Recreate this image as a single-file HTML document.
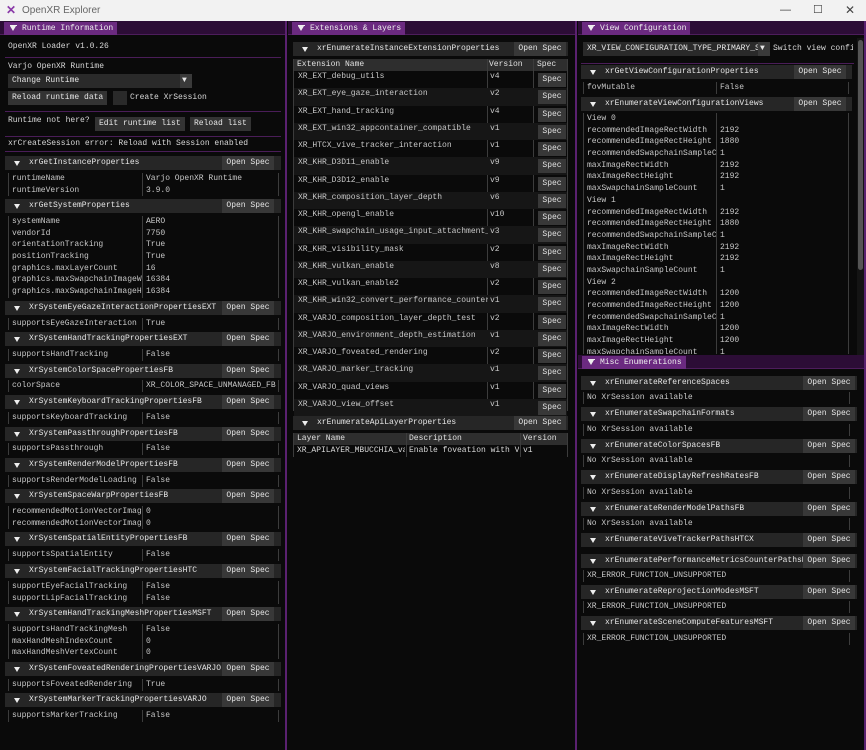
<!DOCTYPE html>
<html><head><meta charset="utf-8"><style>
*{margin:0;padding:0;box-sizing:border-box}
body{width:866px;height:750px;background:#0a0a0a;position:relative;overflow:hidden;font:8px/12px "Liberation Mono",monospace;color:#d8d8d8}
.a{position:absolute;white-space:pre}
.tb{position:absolute;height:21px;background:#f2f2f2;left:0;top:0;width:866px;font:10px/21px "Liberation Sans",sans-serif;color:#666}
.bar{position:absolute;height:14px;background:#2c0d36;border-bottom:1px solid #4d1d5c}
.tab{position:absolute;top:1px;height:13px;background:#6b2a80;color:#eee;padding:0 4px 0 18px;line-height:13px}
.tab:before{content:"";position:absolute;left:6px;top:4px;border:3.5px solid transparent;border-top:5px solid #eee;border-bottom:0}
.tab:after{content:"";position:absolute;left:6px;top:3px;width:7px;height:1px;background:#eee}
.vl{position:absolute;width:2px;background:#5a2170;top:21px}
.sep{position:absolute;height:1px;background:#4a1d58}
.h{position:absolute;height:14px;background:#262626;color:#e6e6e6;line-height:14px;padding-left:24px;white-space:pre;overflow:hidden}
.h:before{content:"";position:absolute;left:9px;top:5px;border:3.5px solid transparent;border-top:5px solid #eee;border-bottom:0}
.h b{position:absolute;right:7px;top:0;width:52px;height:14px;background:#383838;font-weight:normal;text-align:center}
.t{position:absolute;border-left:1px solid #3c3c3c;border-right:1px solid #3c3c3c;color:#c8c8c8}
.r{display:flex;height:11.7px;line-height:11.7px;white-space:pre}
.r i{font-style:normal;overflow:hidden;border-right:1px solid #3c3c3c;padding-left:3px}
.r span{padding-left:3px;overflow:hidden}
.btn{position:absolute;background:#333;height:14px;line-height:14px;padding:0 4px;color:#e6e6e6;white-space:pre}
.er{position:absolute;height:17.26px;line-height:12px;white-space:pre;color:#c8c8c8}
.er i{position:absolute;font-style:normal;left:4px}
.er u{position:absolute;text-decoration:none;left:196px}
.er s{position:absolute;text-decoration:none;left:244px;top:2px;width:28px;height:14px;background:#383838;text-align:center;line-height:14px;color:#e0e0e0}
</style></head><body>
<div class="tb"><span class="a" style="left:6px;top:0;color:#8a3aa8;font-weight:bold;font-size:12px">✕</span><span class="a" style="left:22px;top:0">OpenXR Explorer</span>
<span class="a" style="left:780px;top:0;font-size:11px;color:#444">—</span><span class="a" style="left:813px;top:0;font-size:11px;color:#444">☐</span><span class="a" style="left:845px;top:0;font-size:12px;color:#444">✕</span></div>

<div class="bar" style="left:0;top:21px;width:287px"><div class="tab" style="left:4px">Runtime Information</div></div>
<div class="bar" style="left:288px;top:21px;width:288px"><div class="tab" style="left:4px">Extensions &amp; Layers</div></div>
<div class="bar" style="left:578px;top:21px;width:288px"><div class="tab" style="left:4px">View Configuration</div></div>
<div class="bar" style="left:578px;top:355px;width:288px"><div class="tab" style="left:4px">Misc Enumerations</div></div>
<div class="vl" style="left:285px;height:729px"></div>
<div class="vl" style="left:575px;height:729px"></div>
<div class="vl" style="left:864px;height:729px"></div>

<!-- Panel 1 -->
<div class="a" style="left:8px;top:41px">OpenXR Loader v1.0.26</div>
<div class="sep" style="left:5px;top:57px;width:276px"></div>
<div class="a" style="left:8px;top:61px">Varjo OpenXR Runtime</div>
<div class="btn" style="left:8px;top:74px;width:184px;background:#2a2a2a">Change Runtime</div>
<div class="btn" style="left:180px;top:74px;width:12px;background:#3a3a3a;padding:0 2px">▼</div>
<div class="btn" style="left:8px;top:91px">Reload runtime data</div>
<div class="a" style="left:113px;top:91px;width:14px;height:14px;background:#2a2a2a"></div>
<div class="a" style="left:130px;top:92px">Create XrSession</div>
<div class="sep" style="left:5px;top:111px;width:276px"></div>
<div class="a" style="left:8px;top:115px">Runtime not here?</div>
<div class="btn" style="left:95px;top:117px">Edit runtime list</div>
<div class="btn" style="left:190px;top:117px">Reload list</div>
<div class="sep" style="left:5px;top:136px;width:276px"></div>
<div class="a" style="left:8px;top:138px">xrCreateSession error: Reload with Session enabled</div>
<div class="sep" style="left:5px;top:151px;width:276px"></div>

<div class="h" style="left:5px;top:156px;width:276px">xrGetInstanceProperties<b>Open Spec</b></div>
<div class="t" style="left:8px;top:173px;width:271px"><div class="r"><i style="width:134px">runtimeName</i><span>Varjo OpenXR Runtime</span></div><div class="r"><i style="width:134px">runtimeVersion</i><span>3.9.0</span></div></div>
<div class="h" style="left:5px;top:199px;width:276px">xrGetSystemProperties<b>Open Spec</b></div>
<div class="t" style="left:8px;top:216px;width:271px"><div class="r"><i style="width:134px">systemName</i><span>AERO</span></div><div class="r"><i style="width:134px">vendorId</i><span>7750</span></div><div class="r"><i style="width:134px">orientationTracking</i><span>True</span></div><div class="r"><i style="width:134px">positionTracking</i><span>True</span></div><div class="r"><i style="width:134px">graphics.maxLayerCount</i><span>16</span></div><div class="r"><i style="width:134px">graphics.maxSwapchainImageWidth</i><span>16384</span></div><div class="r"><i style="width:134px">graphics.maxSwapchainImageHeight</i><span>16384</span></div></div>
<div class="h" style="left:5px;top:301px;width:276px">XrSystemEyeGazeInteractionPropertiesEXT<b>Open Spec</b></div>
<div class="t" style="left:8px;top:318px;width:271px"><div class="r"><i style="width:134px">supportsEyeGazeInteraction</i><span>True</span></div></div>
<div class="h" style="left:5px;top:332px;width:276px">XrSystemHandTrackingPropertiesEXT<b>Open Spec</b></div>
<div class="t" style="left:8px;top:349px;width:271px"><div class="r"><i style="width:134px">supportsHandTracking</i><span>False</span></div></div>
<div class="h" style="left:5px;top:364px;width:276px">XrSystemColorSpacePropertiesFB<b>Open Spec</b></div>
<div class="t" style="left:8px;top:380px;width:271px"><div class="r"><i style="width:134px">colorSpace</i><span>XR_COLOR_SPACE_UNMANAGED_FB</span></div></div>
<div class="h" style="left:5px;top:395px;width:276px">XrSystemKeyboardTrackingPropertiesFB<b>Open Spec</b></div>
<div class="t" style="left:8px;top:412px;width:271px"><div class="r"><i style="width:134px">supportsKeyboardTracking</i><span>False</span></div></div>
<div class="h" style="left:5px;top:427px;width:276px">XrSystemPassthroughPropertiesFB<b>Open Spec</b></div>
<div class="t" style="left:8px;top:443px;width:271px"><div class="r"><i style="width:134px">supportsPassthrough</i><span>False</span></div></div>
<div class="h" style="left:5px;top:458px;width:276px">XrSystemRenderModelPropertiesFB<b>Open Spec</b></div>
<div class="t" style="left:8px;top:475px;width:271px"><div class="r"><i style="width:134px">supportsRenderModelLoading</i><span>False</span></div></div>
<div class="h" style="left:5px;top:489px;width:276px">XrSystemSpaceWarpPropertiesFB<b>Open Spec</b></div>
<div class="t" style="left:8px;top:506px;width:271px"><div class="r"><i style="width:134px">recommendedMotionVectorImageRectWidth</i><span>0</span></div><div class="r"><i style="width:134px">recommendedMotionVectorImageRectHeight</i><span>0</span></div></div>
<div class="h" style="left:5px;top:532px;width:276px">XrSystemSpatialEntityPropertiesFB<b>Open Spec</b></div>
<div class="t" style="left:8px;top:549px;width:271px"><div class="r"><i style="width:134px">supportsSpatialEntity</i><span>False</span></div></div>
<div class="h" style="left:5px;top:564px;width:276px">XrSystemFacialTrackingPropertiesHTC<b>Open Spec</b></div>
<div class="t" style="left:8px;top:581px;width:271px"><div class="r"><i style="width:134px">supportEyeFacialTracking</i><span>False</span></div><div class="r"><i style="width:134px">supportLipFacialTracking</i><span>False</span></div></div>
<div class="h" style="left:5px;top:607px;width:276px">XrSystemHandTrackingMeshPropertiesMSFT<b>Open Spec</b></div>
<div class="t" style="left:8px;top:624px;width:271px"><div class="r"><i style="width:134px">supportsHandTrackingMesh</i><span>False</span></div><div class="r"><i style="width:134px">maxHandMeshIndexCount</i><span>0</span></div><div class="r"><i style="width:134px">maxHandMeshVertexCount</i><span>0</span></div></div>
<div class="h" style="left:5px;top:662px;width:276px">XrSystemFoveatedRenderingPropertiesVARJO<b>Open Spec</b></div>
<div class="t" style="left:8px;top:679px;width:271px"><div class="r"><i style="width:134px">supportsFoveatedRendering</i><span>True</span></div></div>
<div class="h" style="left:5px;top:693px;width:276px">XrSystemMarkerTrackingPropertiesVARJO<b>Open Spec</b></div>
<div class="t" style="left:8px;top:710px;width:271px"><div class="r"><i style="width:134px">supportsMarkerTracking</i><span>False</span></div></div>

<!-- Panel 2 -->
<div class="h" style="left:293px;top:42px;width:275px">xrEnumerateInstanceExtensionProperties<b style="right:2px">Open Spec</b></div>
<div class="a" style="left:293px;top:59px;width:275px;height:352px;border-left:1px solid #3c3c3c;border-right:1px solid #3c3c3c"></div>
<div class="a" style="left:294px;top:59px;width:273px;height:12px;background:#2e2e2e;color:#e0e0e0"><span class="a" style="left:3px">Extension Name</span><span class="a" style="left:195px">Version</span><span class="a" style="left:243px">Spec</span></div>
<div class="a" style="left:487px;top:59px;width:1px;height:352px;background:#3c3c3c"></div>
<div class="a" style="left:533px;top:59px;width:1px;height:352px;background:#3c3c3c"></div>
<div class="er" style="left:294px;top:71px;width:273px"><i>XR_EXT_debug_utils</i><u>v4</u><s>Spec</s></div>
<div class="er" style="left:294px;top:88.3px;width:273px;background:#161616"><i>XR_EXT_eye_gaze_interaction</i><u>v2</u><s>Spec</s></div>
<div class="er" style="left:294px;top:105.5px;width:273px"><i>XR_EXT_hand_tracking</i><u>v4</u><s>Spec</s></div>
<div class="er" style="left:294px;top:122.8px;width:273px;background:#161616"><i>XR_EXT_win32_appcontainer_compatible</i><u>v1</u><s>Spec</s></div>
<div class="er" style="left:294px;top:140px;width:273px"><i>XR_HTCX_vive_tracker_interaction</i><u>v1</u><s>Spec</s></div>
<div class="er" style="left:294px;top:157.3px;width:273px;background:#161616"><i>XR_KHR_D3D11_enable</i><u>v9</u><s>Spec</s></div>
<div class="er" style="left:294px;top:174.6px;width:273px"><i>XR_KHR_D3D12_enable</i><u>v9</u><s>Spec</s></div>
<div class="er" style="left:294px;top:191.8px;width:273px;background:#161616"><i>XR_KHR_composition_layer_depth</i><u>v6</u><s>Spec</s></div>
<div class="er" style="left:294px;top:209px;width:273px"><i>XR_KHR_opengl_enable</i><u>v10</u><s>Spec</s></div>
<div class="er" style="left:294px;top:226.3px;width:273px;background:#161616"><i style="width:190px;overflow:hidden">XR_KHR_swapchain_usage_input_attachment_bit</i><u>v3</u><s>Spec</s></div>
<div class="er" style="left:294px;top:243.6px;width:273px"><i>XR_KHR_visibility_mask</i><u>v2</u><s>Spec</s></div>
<div class="er" style="left:294px;top:260.9px;width:273px;background:#161616"><i>XR_KHR_vulkan_enable</i><u>v8</u><s>Spec</s></div>
<div class="er" style="left:294px;top:278.1px;width:273px"><i>XR_KHR_vulkan_enable2</i><u>v2</u><s>Spec</s></div>
<div class="er" style="left:294px;top:295.4px;width:273px;background:#161616"><i style="width:190px;overflow:hidden">XR_KHR_win32_convert_performance_counter_time</i><u>v1</u><s>Spec</s></div>
<div class="er" style="left:294px;top:312.6px;width:273px"><i>XR_VARJO_composition_layer_depth_test</i><u>v2</u><s>Spec</s></div>
<div class="er" style="left:294px;top:329.9px;width:273px;background:#161616"><i>XR_VARJO_environment_depth_estimation</i><u>v1</u><s>Spec</s></div>
<div class="er" style="left:294px;top:347.2px;width:273px"><i>XR_VARJO_foveated_rendering</i><u>v2</u><s>Spec</s></div>
<div class="er" style="left:294px;top:364.4px;width:273px;background:#161616"><i>XR_VARJO_marker_tracking</i><u>v1</u><s>Spec</s></div>
<div class="er" style="left:294px;top:381.7px;width:273px"><i>XR_VARJO_quad_views</i><u>v1</u><s>Spec</s></div>
<div class="er" style="left:294px;top:399px;width:273px;background:#161616"><i>XR_VARJO_view_offset</i><u>v1</u><s>Spec</s></div>
<div class="h" style="left:293px;top:416px;width:275px">xrEnumerateApiLayerProperties<b style="right:2px">Open Spec</b></div>
<div class="a" style="left:293px;top:433px;width:275px;height:24px;border-left:1px solid #3c3c3c;border-right:1px solid #3c3c3c"></div>
<div class="a" style="left:294px;top:433px;width:273px;height:12px;background:#2e2e2e;color:#e0e0e0"><span class="a" style="left:3px">Layer Name</span><span class="a" style="left:115px">Description</span><span class="a" style="left:229px">Version</span></div>
<div class="a" style="left:406px;top:433px;width:1px;height:24px;background:#3c3c3c"></div>
<div class="a" style="left:520px;top:433px;width:1px;height:24px;background:#3c3c3c"></div>
<div class="a" style="left:297px;top:445px;width:108px;overflow:hidden">XR_APILAYER_MBUCCHIA_vartjo_foveated</div>
<div class="a" style="left:409px;top:445px;width:110px;overflow:hidden">Enable foveation with Varjo</div>
<div class="a" style="left:523px;top:445px">v1</div>

<!-- Panel 3 -->
<div class="btn" style="left:583px;top:42px;width:187px;background:#2a2a2a;overflow:hidden">XR_VIEW_CONFIGURATION_TYPE_PRIMARY_STEREO</div>
<div class="btn" style="left:758px;top:42px;width:12px;background:#3a3a3a;padding:0 2px">▼</div>
<div class="a" style="left:773px;top:43px;width:80px;overflow:hidden">Switch view configuration</div>
<div class="sep" style="left:581px;top:63px;width:273px"></div>
<div class="a" style="left:857px;top:38px;width:7px;height:317px;background:#141414"></div>
<div class="a" style="left:858px;top:40px;width:5px;height:230px;background:#555;border-radius:3px"></div>
<div class="h" style="left:581px;top:65px;width:271px">xrGetViewConfigurationProperties<b style="right:6px">Open Spec</b></div>
<div class="t" style="left:583px;top:82px;width:266px"><div class="r"><i style="width:133px">fovMutable</i><span>False</span></div></div>
<div class="h" style="left:581px;top:97px;width:271px">xrEnumerateViewConfigurationViews<b style="right:6px">Open Spec</b></div>
<div class="t" style="left:583px;top:113px;width:266px;height:241px;overflow:hidden;color:#c8c8c8">
<div class="r"><i style="width:133px">View 0</i><span></span></div><div class="r"><i style="width:133px">recommendedImageRectWidth</i><span>2192</span></div><div class="r"><i style="width:133px">recommendedImageRectHeight</i><span>1880</span></div><div class="r"><i style="width:133px">recommendedSwapchainSampleCount</i><span>1</span></div><div class="r"><i style="width:133px">maxImageRectWidth</i><span>2192</span></div><div class="r"><i style="width:133px">maxImageRectHeight</i><span>2192</span></div><div class="r"><i style="width:133px">maxSwapchainSampleCount</i><span>1</span></div>
<div class="r"><i style="width:133px">View 1</i><span></span></div><div class="r"><i style="width:133px">recommendedImageRectWidth</i><span>2192</span></div><div class="r"><i style="width:133px">recommendedImageRectHeight</i><span>1880</span></div><div class="r"><i style="width:133px">recommendedSwapchainSampleCount</i><span>1</span></div><div class="r"><i style="width:133px">maxImageRectWidth</i><span>2192</span></div><div class="r"><i style="width:133px">maxImageRectHeight</i><span>2192</span></div><div class="r"><i style="width:133px">maxSwapchainSampleCount</i><span>1</span></div>
<div class="r"><i style="width:133px">View 2</i><span></span></div><div class="r"><i style="width:133px">recommendedImageRectWidth</i><span>1200</span></div><div class="r"><i style="width:133px">recommendedImageRectHeight</i><span>1200</span></div><div class="r"><i style="width:133px">recommendedSwapchainSampleCount</i><span>1</span></div><div class="r"><i style="width:133px">maxImageRectWidth</i><span>1200</span></div><div class="r"><i style="width:133px">maxImageRectHeight</i><span>1200</span></div><div class="r"><i style="width:133px">maxSwapchainSampleCount</i><span>1</span></div>
</div>

<!-- Misc -->
<div class="h" style="left:581px;top:376px;width:276px">xrEnumerateReferenceSpaces<b style="right:2px">Open Spec</b></div>
<div class="t" style="left:583px;top:392px;width:267px"><div class="r"><span>No XrSession available</span></div></div>
<div class="h" style="left:581px;top:407px;width:276px">xrEnumerateSwapchainFormats<b style="right:2px">Open Spec</b></div>
<div class="t" style="left:583px;top:424px;width:267px"><div class="r"><span>No XrSession available</span></div></div>
<div class="h" style="left:581px;top:439px;width:276px">xrEnumerateColorSpacesFB<b style="right:2px">Open Spec</b></div>
<div class="t" style="left:583px;top:455px;width:267px"><div class="r"><span>No XrSession available</span></div></div>
<div class="h" style="left:581px;top:470px;width:276px">xrEnumerateDisplayRefreshRatesFB<b style="right:2px">Open Spec</b></div>
<div class="t" style="left:583px;top:487px;width:267px"><div class="r"><span>No XrSession available</span></div></div>
<div class="h" style="left:581px;top:502px;width:276px">xrEnumerateRenderModelPathsFB<b style="right:2px">Open Spec</b></div>
<div class="t" style="left:583px;top:518px;width:267px"><div class="r"><span>No XrSession available</span></div></div>
<div class="h" style="left:581px;top:533px;width:276px">xrEnumerateViveTrackerPathsHTCX<b style="right:2px">Open Spec</b></div>
<div class="h" style="left:581px;top:554px;width:276px">xrEnumeratePerformanceMetricsCounterPathsMETA<b style="right:2px">Open Spec</b></div>
<div class="t" style="left:583px;top:570px;width:267px"><div class="r"><span>XR_ERROR_FUNCTION_UNSUPPORTED</span></div></div>
<div class="h" style="left:581px;top:585px;width:276px">xrEnumerateReprojectionModesMSFT<b style="right:2px">Open Spec</b></div>
<div class="t" style="left:583px;top:601px;width:267px"><div class="r"><span>XR_ERROR_FUNCTION_UNSUPPORTED</span></div></div>
<div class="h" style="left:581px;top:616px;width:276px">xrEnumerateSceneComputeFeaturesMSFT<b style="right:2px">Open Spec</b></div>
<div class="t" style="left:583px;top:633px;width:267px"><div class="r"><span>XR_ERROR_FUNCTION_UNSUPPORTED</span></div></div>
</body></html>
